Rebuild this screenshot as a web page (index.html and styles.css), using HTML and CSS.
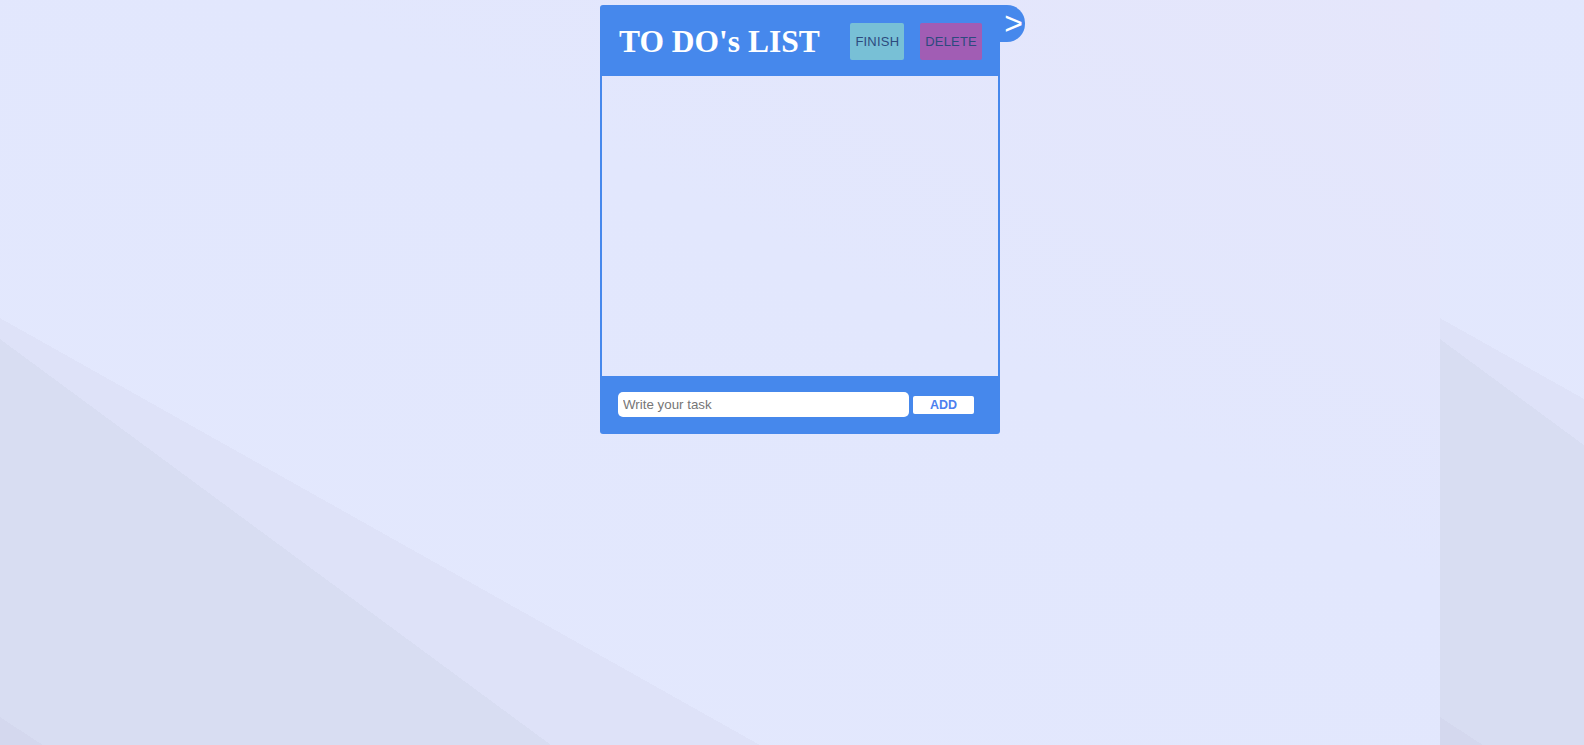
FILE: index.html
```html
<!DOCTYPE html>
<html lang="en">
<head>
<meta charset="utf-8">
<title>TO DO's LIST</title>
<link rel="stylesheet" href="styles.css">
</head>
<body>
  <div class="app">
    <div class="todo">
      <header class="todo-header">
        <h1 class="title">TO DO's LIST</h1>
        <button class="btn btn-finish" type="button">FINISH</button>
        <button class="btn btn-delete" type="button">DELETE</button>
      </header>
      <ul class="task-list"></ul>
      <form class="todo-footer">
        <input class="task-input" type="text" placeholder="Write your task">
        <button class="btn-add" type="button">ADD</button>
      </form>
    </div>
    <button class="toggle" type="button">&gt;</button>
  </div>
</body>
</html>
```

FILE: styles.css
```css
html {
  height: 100%;
  background-color: #e2e7fd;
  background-image:
    linear-gradient(213.07deg, transparent 1386.7px, #d4d8ee 1386.7px),
    linear-gradient(216.38deg, transparent 1127.1px, #d8ddf2 1127.1px),
    linear-gradient(209.33deg, transparent 982.7px, #dee2f8 982.7px),
    linear-gradient(to bottom left, #e5e6fb 0%, #e2e7fd 40%, #e3e8fd 100%);
  background-size: 1440px 745px;
  background-repeat: repeat-x;
}

body {
  margin: 0;
  font-family: "Liberation Sans", Arial, sans-serif;
}

.app {
  display: flex;
  align-items: flex-start;
  margin: 5px 0 0 calc(50% - 192px);
}

.todo {
  width: 400px;
  display: flex;
  flex-direction: column;
}

.todo-header {
  height: 71px;
  box-sizing: border-box;
  padding: 2px 18px 0 19px;
  background: #4688ec;
  border-top-left-radius: 3px;
  display: flex;
  align-items: center;
}

.title {
  margin: 0;
  font-family: "Liberation Serif", "Times New Roman", serif;
  font-weight: 700;
  font-size: 31.5px;
  color: #ffffff;
}

.btn {
  height: 37px;
  padding: 0 5px;
  border: none;
  border-radius: 2px;
  font-family: "Liberation Sans", Arial, sans-serif;
  font-size: 13px;
  letter-spacing: 0.2px;
  color: #2d4a7e;
}

.btn-finish {
  margin-left: auto;
  background: #78c0d6;
}

.btn-delete {
  margin-left: 16px;
  background: #a15db4;
}

.task-list {
  height: 300px;
  box-sizing: border-box;
  margin: 0;
  padding: 0;
  list-style: none;
  border-left: 2px solid #4688ec;
  border-right: 2px solid #4688ec;
}

.todo-footer {
  height: 58px;
  margin: 0;
  box-sizing: border-box;
  padding: 0 18px 1px;
  background: #4688ec;
  border-radius: 0 0 3px 3px;
  display: flex;
  align-items: center;
}

.task-input {
  width: 291px;
  height: 25px;
  box-sizing: border-box;
  padding: 0 5px;
  border: none;
  border-radius: 5px;
  background: #ffffff;
  font-family: "Liberation Sans", Arial, sans-serif;
  font-size: 13.33px;
  color: #333;
  outline: none;
}

.task-input::placeholder {
  color: #767676;
}

.btn-add {
  margin-left: 4px;
  width: 61px;
  height: 18px;
  padding: 0;
  border: none;
  border-radius: 2px;
  background: #ffffff;
  font-family: "Liberation Sans", Arial, sans-serif;
  font-weight: 700;
  font-size: 12.5px;
  color: #4d7fef;
}

.toggle {
  width: 25px;
  height: 37px;
  padding: 0 0 0 2px;
  border: none;
  border-radius: 0 18px 18px 0;
  background: #4688ec;
  color: #ffffff;
  font-family: "Liberation Sans", Arial, sans-serif;
  font-size: 32px;
  line-height: 37px;
}
```
